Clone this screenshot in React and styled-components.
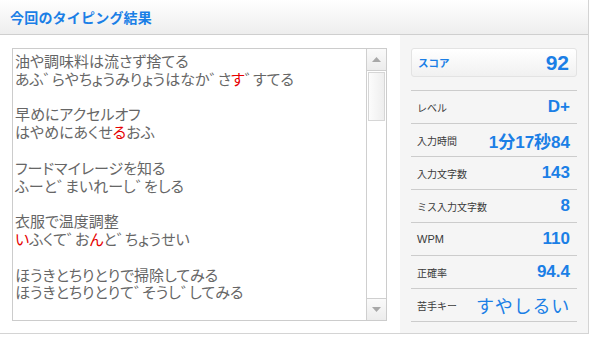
import React from "react";
import styled, { createGlobalStyle } from "styled-components";

const GlobalStyle = createGlobalStyle`
  html, body { margin: 0; padding: 0; background: #fff; }
  body { font-family: "Noto Sans CJK JP", "Noto Sans", sans-serif; }
`;

const BLUE = "#1b7fe6";

const Frame = styled.div`
  width: 588px;
  border-right: 1px solid #d4d4d4;
  border-bottom: 1px solid #d4d4d4;
`;

const Header = styled.div`
  height: 35px;
  box-sizing: border-box;
  border-bottom: 1px solid #cfcfcf;
  background: linear-gradient(#ffffff, #eeeeee);
  display: flex;
  align-items: center;
  padding-left: 10px;
`;

const Title = styled.h1`
  margin: 0;
  font-size: 14px;
  font-weight: 700;
  color: ${BLUE};
  letter-spacing: 0.2px;
  font-family: "Noto Sans CJK JP", sans-serif;
`;

const Main = styled.div`
  display: flex;
  height: 298px;
`;

const LeftPane = styled.div`
  width: 400px;
  box-sizing: border-box;
  padding: 13px 13px 12px 12px;
  background: #fff;
`;

const TextBox = styled.div`
  height: 273px;
  box-sizing: border-box;
  border: 1px solid #cccccc;
  display: flex;
`;

const TextContent = styled.div`
  flex: 1;
  overflow: hidden;
  padding: 3px 2px;
  font-size: 15px;
  line-height: 17.8px;
  color: #666666;
  font-family: "Noto Sans CJK JP", sans-serif;
  font-feature-settings: "palt";
  white-space: pre;
`;

const Line = styled.div`
  height: 17.8px;
`;

const Miss = styled.span`
  color: #e60000;
`;

const Mark = styled.span`
  letter-spacing: -0.45em;
  margin-right: 0.45em;
  margin-right: 0;
`;

const Scrollbar = styled.div`
  width: 19px;
  border-left: 1px solid #cfcfcf;
  display: flex;
  flex-direction: column;
  background: #fff;
`;

const ScrollButton = styled.div`
  height: 21px;
  background: linear-gradient(#fafafa, #ececec);
  border-${(p) => (p.$down ? "top" : "bottom")}: 1px solid #cfcfcf;
  display: flex;
  align-items: center;
  justify-content: center;
`;

const Track = styled.div`
  flex: 1;
  padding: 1px 1px;
`;

const Thumb = styled.div`
  height: 49px;
  box-sizing: border-box;
  border: 1px solid #d6d6d6;
  background: linear-gradient(90deg, #fcfcfc, #eeeeee);
`;

const Arrow = ({ down }) => (
  <svg width="9" height="5" viewBox="0 0 9 5">
    <polygon
      points={down ? "0,0 9,0 4.5,5" : "0,5 9,5 4.5,0"}
      fill="#a8a8a8"
    />
  </svg>
);

const RightPane = styled.div`
  flex: 1;
  background: #f5f5f5;
  padding: 13px 11px 0 11px;
`;

const ScoreBox = styled.div`
  height: 29px;
  box-sizing: border-box;
  border: 1px solid #e3e3e3;
  border-radius: 3px;
  background: linear-gradient(#ffffff, #f1f1f1);
  display: flex;
  align-items: center;
  justify-content: space-between;
  padding: 0 7px 0 6px;
  margin-bottom: 13px;
`;

const ScoreLabel = styled.span`
  font-size: 10.5px;
  font-weight: 700;
  color: ${BLUE};
`;

const ScoreValue = styled.span`
  font-family: "Liberation Sans", Arial, sans-serif;
  font-size: 21px;
  font-weight: 700;
  color: ${BLUE};
`;

const Stats = styled.div`
  border-bottom: 1px solid #cccccc;
`;

const Row = styled.div`
  height: 33px;
  box-sizing: border-box;
  border-top: 1px solid #cccccc;
  display: flex;
  align-items: center;
  justify-content: space-between;
  padding: 0 7px 0 6px;
`;

const Label = styled.span`
  color: #3a3a3a;
  font-family: ${(p) => (p.$latin ? '"Liberation Sans", Arial, sans-serif' : '"Noto Sans CJK JP", sans-serif')};
  font-size: ${(p) => (p.$latin ? "11px" : "10px")};
`;

const Value = styled.span`
  font-family: "Liberation Sans", "Noto Sans CJK JP", Arial, sans-serif;
  font-size: 17px;
  font-weight: 700;
  color: ${BLUE};
`;

const KeyValue = styled.span`
  font-family: "Noto Sans CJK JP", sans-serif;
  font-size: 18px;
  font-weight: 400;
  letter-spacing: 0.8px;
  color: ${BLUE};
`;

const D = () => <Mark>゛</Mark>;

const lines = [
  ["油や調味料は流さず捨てる"],
  ["あふ", <D key="d1" />, "らやちょうみりょうはなか", <D key="d2" />, "さ", <Miss key="m">す</Miss>, <D key="d3" />, "すてる"],
  [""],
  ["早めにアクセルオフ"],
  ["はやめにあくせ", <Miss key="m">る</Miss>, "おふ"],
  [""],
  ["フードマイレージを知る"],
  ["ふーと", <D key="d1" />, "まいれーし", <D key="d2" />, "をしる"],
  [""],
  ["衣服で温度調整"],
  [<Miss key="a">い</Miss>, "ふくて", <D key="d1" />, "お", <Miss key="b">ん</Miss>, "と", <D key="d2" />, "ちょうせい"],
  [""],
  ["ほうきとちりとりで掃除してみる"],
  ["ほうきとちりとりて", <D key="d1" />, "そうし", <D key="d2" />, "してみる"],
];

const stats = [
  { label: "レベル", value: "D+" },
  { label: "入力時間", value: "1分17秒84" },
  { label: "入力文字数", value: "143" },
  { label: "ミス入力文字数", value: "8" },
  { label: "WPM", value: "110", latin: true },
  { label: "正確率", value: "94.4" },
];

export default function App() {
  return (
    <>
      <GlobalStyle />
      <Frame>
        <Header>
          <Title>今回のタイピング結果</Title>
        </Header>
        <Main>
          <LeftPane>
            <TextBox>
              <TextContent>
                {lines.map((parts, i) => (
                  <Line key={i}>{parts}</Line>
                ))}
              </TextContent>
              <Scrollbar>
                <ScrollButton>
                  <Arrow />
                </ScrollButton>
                <Track>
                  <Thumb />
                </Track>
                <ScrollButton $down>
                  <Arrow down />
                </ScrollButton>
              </Scrollbar>
            </TextBox>
          </LeftPane>
          <RightPane>
            <ScoreBox>
              <ScoreLabel>スコア</ScoreLabel>
              <ScoreValue>92</ScoreValue>
            </ScoreBox>
            <Stats>
              {stats.map((s) => (
                <Row key={s.label}>
                  <Label $latin={s.latin}>{s.label}</Label>
                  <Value>{s.value}</Value>
                </Row>
              ))}
              <Row>
                <Label>苦手キー</Label>
                <KeyValue>すやしるい</KeyValue>
              </Row>
            </Stats>
          </RightPane>
        </Main>
      </Frame>
    </>
  );
}
